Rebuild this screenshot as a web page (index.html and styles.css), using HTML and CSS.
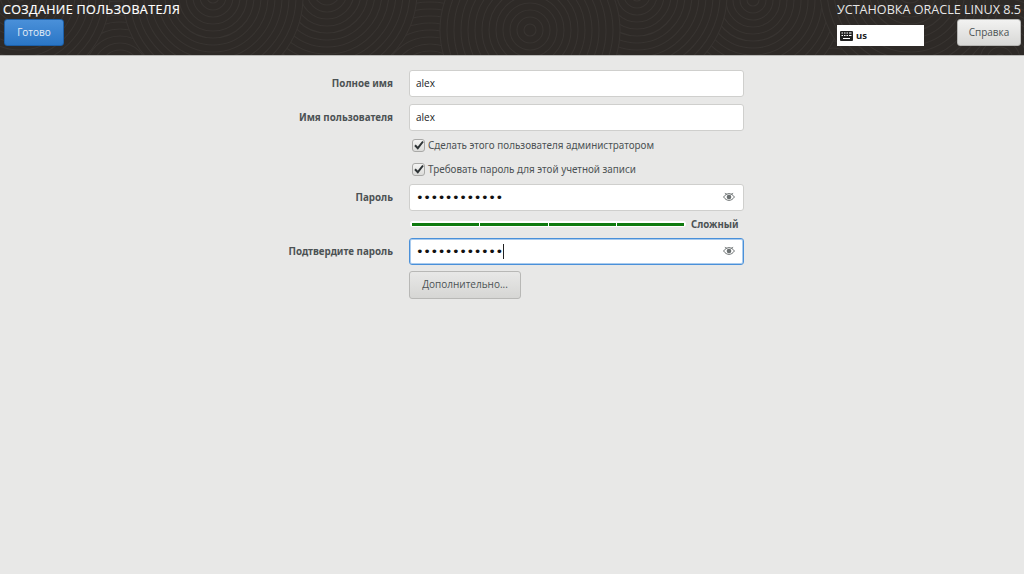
FILE: index.html
```html
<!DOCTYPE html>
<html lang="ru">
<head>
<meta charset="utf-8">
<title>Создание пользователя</title>
<link rel="stylesheet" href="styles.css">
</head>
<body>
<header class="topbar">
  <svg class="texture" width="1024" height="55" viewBox="0 0 1024 55">
    <defs>
      <g id="rings" fill="#2e2a27" stroke="#383431" stroke-width="1.100">
        <circle r="90"/><circle r="83"/><circle r="76"/><circle r="69"/><circle r="62"/><circle r="55"/><circle r="48"/><circle r="41"/><circle r="34"/><circle r="27"/><circle r="20"/><circle r="13"/><circle r="6"/>
      </g>
    </defs>
    <use href="#rings" x="430" y="85"/>
    <use href="#rings" x="833" y="75"/>
    <use href="#rings" x="120" y="70"/>
    <use href="#rings" x="327" y="-8"/>
    <use href="#rings" x="213" y="-3"/>
    <use href="#rings" x="753" y="0"/>
    <use href="#rings" x="637" y="-5"/>
    <use href="#rings" x="530" y="30"/>
    <use href="#rings" x="20" y="-5"/>
    <use href="#rings" x="1000" y="60"/>
    <use href="#rings" x="910" y="-10"/>
  </svg>
  <div class="topbar-left">
    <h1 class="title">СОЗДАНИЕ ПОЛЬЗОВАТЕЛЯ</h1>
    <button class="btn btn-done" type="button">Готово</button>
  </div>
  <div class="topbar-right">
    <div class="product">УСТАНОВКА ORACLE LINUX 8.5</div>
    <div class="topbar-controls">
      <div class="layout">
        <svg class="kbd-icon" width="13" height="10" viewBox="0 0 13 10">
          <rect width="13" height="10" rx="1" fill="#222"/>
          <path d="M1.500 2h1.500M4 2h1.500M6.500 2H8M9 2h2.500M1.500 4.500H3M4 4.500h1.500M6.500 4.500H8M9 4.500h2.500M3 7.500h7" stroke="#fff" stroke-width="1" fill="none"/>
        </svg>
        <span>us</span>
      </div>
      <button class="btn btn-help" type="button">Справка</button>
    </div>
  </div>
</header>
<main class="form">
  <label class="label">Полное имя</label>
  <div class="entry"><span class="value">alex</span></div>

  <label class="label">Имя пользователя</label>
  <div class="entry"><span class="value">alex</span></div>

  <div class="check check-first">
    <span class="box"><svg width="10" height="10" viewBox="0 0 10 10"><path d="M1 5.200 3.800 8.200 9 1.500" fill="none" stroke="#2e3436" stroke-width="2"/></svg></span>
    <span>Сделать этого пользователя администратором</span>
  </div>
  <div class="check">
    <span class="box"><svg width="10" height="10" viewBox="0 0 10 10"><path d="M1 5.200 3.800 8.200 9 1.500" fill="none" stroke="#2e3436" stroke-width="2"/></svg></span>
    <span>Требовать пароль для этой учетной записи</span>
  </div>

  <label class="label label-pass">Пароль</label>
  <div class="entry entry-pass">
    <span class="dots">••••••••••••</span>
    <svg class="eye" width="12" height="10" viewBox="0 0 14 12"><path d="M.5 6C2.500 3.200 4.600 2 7 2s4.500 1.200 6.500 4c-2 2.800-4.100 4-6.500 4S2.500 8.800.5 6z" fill="none" stroke="#6a6f70" stroke-width="1.200"/><circle cx="7" cy="6" r="2.800" fill="#6a6f70"/><path d="M2 1.500 5 3M12 1.500 9 3" stroke="#6a6f70"/></svg>
  </div>

  <div class="strength">
    <div class="meter"><i></i><i></i><i></i><i></i></div>
    <span class="strength-text">Сложный</span>
  </div>

  <label class="label">Подтвердите пароль</label>
  <div class="entry entry-pass entry-focus">
    <span class="dots">••••••••••••</span><span class="caret"></span>
    <svg class="eye" width="12" height="10" viewBox="0 0 14 12"><path d="M.5 6C2.500 3.200 4.600 2 7 2s4.500 1.200 6.500 4c-2 2.800-4.100 4-6.500 4S2.500 8.800.5 6z" fill="none" stroke="#6a6f70" stroke-width="1.200"/><circle cx="7" cy="6" r="2.800" fill="#6a6f70"/><path d="M2 1.500 5 3M12 1.500 9 3" stroke="#6a6f70"/></svg>
  </div>

  <div class="advanced-row"><button class="btn btn-adv" type="button">Дополнительно...</button></div>
</main>
</body>
</html>
```
FILE: styles.css
```css
* { box-sizing: border-box; }
html, body { margin: 0; height: 100%; }
body {
  background: #e8e8e7;
  font-family: "Noto Sans", sans-serif;
  color: #2e3436;
  overflow: hidden;
}
.topbar {
  position: relative;
  height: 56px;
  background: #2e2a27;
  border-bottom: 1px solid #b8b8b6;
  display: flex;
  justify-content: space-between;
  overflow: hidden;
}
.texture { position: absolute; left: 0; top: 0; }
.topbar-left, .topbar-right { position: relative; }
.topbar-left { padding: 3px 0 0 3px; }
.title {
  margin: 0;
  font: 400 12.500px/14px "Open Sans", sans-serif;
  letter-spacing: .03em;
  color: #fff;
  height: 16px;
  -webkit-text-stroke: .2px #fff;
}
.btn {
  font-family: "Open Sans", sans-serif;
  font-size: 10px;
  border-radius: 3px;
  padding: 0 0 2px;
}
.btn-done {
  display: block;
  width: 60px;
  height: 27px;
  margin-left: 1px;
  border: 1px solid #1c5fa8;
  background: linear-gradient(#4a90d9, #2a76c6);
  color: #e6eef7;
}
.topbar-right {
  padding: 3px 3px 0 0;
  display: flex;
  flex-direction: column;
  align-items: flex-end;
}
.product {
  font: 400 12.600px/14px "Open Sans", sans-serif;
  color: #e6e6e6;
  height: 16px;
}
.topbar-controls { display: flex; gap: 33px; align-items: flex-end; }
.layout {
  width: 87px;
  height: 21px;
  background: #fff;
  display: flex;
  align-items: center;
  gap: 3px;
  padding-left: 3px;
  font: 700 9.500px "Noto Sans", sans-serif;
  color: #222;
}
.btn-help {
  width: 64px;
  height: 27px;
  border: 1px solid #b5b5b3;
  background: linear-gradient(#f2f2f1, #d8d8d6);
  color: #4c5254;
}
.form {
  display: grid;
  grid-template-columns: 393px 335px;
  column-gap: 16px;
  padding-top: 14px;
  align-items: center;
}
.label {
  justify-self: end;
  margin-bottom: 7px;
  font: 700 9.800px/26px "Noto Sans", sans-serif;
  color: #4c5254;
}
.entry {
  grid-column: 2;
  height: 27px;
  margin-bottom: 7px;
  background: #fff;
  border: 1px solid #cfcfcd;
  border-radius: 3px;
  padding: 0 6px 1px;
  display: flex;
  align-items: center;
  font: 400 10px "Open Sans", sans-serif;
  color: #222;
}
.check {
  grid-column: 2;
  height: 24px;
  display: flex;
  align-items: center;
  gap: 3px;
  padding-left: 3px;
  font: 400 9.900px "Noto Sans", sans-serif;
  color: #4c5254;
}
.check-first { margin-top: -5px; }
.box {
  width: 13px;
  height: 13px;
  border: 1px solid #a9a9a7;
  border-radius: 3px;
  background: linear-gradient(#f4f4f3, #dcdcda);
  display: flex;
  align-items: center;
  justify-content: center;
}
.label-pass { margin-top: 3px; }
.entry-pass { margin-top: 3px; }
.dots { font: 13px/1 "DejaVu Sans", sans-serif; letter-spacing: -.45px; color: #111; }
.eye { margin-left: auto; margin-right: 2px; }
.caret { width: 1px; height: 15px; background: #222; }
.entry-focus { margin-top: 0; border-color: #4a90d9; box-shadow: inset 0 0 0 1px #a9cbee; }
.strength {
  grid-column: 2;
  height: 27px;
  margin: -7px -16px 0 0;
  padding: 0 0 2px 1px;
  display: flex;
  align-items: center;
  gap: 5px;
}
.meter {
  width: 276px;
  height: 6px;
  background: #fff;
  border-radius: 3px;
  padding: 2px 2px 1px;
  display: flex;
  gap: 1px;
}
.meter i { flex: 1; background: #0f7a0f; }
.strength-text { margin-top: 2px; font: 700 9.700px "Noto Sans", sans-serif; color: #4c5254; }
.advanced-row { grid-column: 2; margin-top: -1px; }
.btn-adv {
  display: block;
  width: 112px;
  height: 28px;
  border: 1px solid #b8b8b6;
  background: linear-gradient(#e8e8e7, #d6d6d4);
  color: #4c5254;
}
```
